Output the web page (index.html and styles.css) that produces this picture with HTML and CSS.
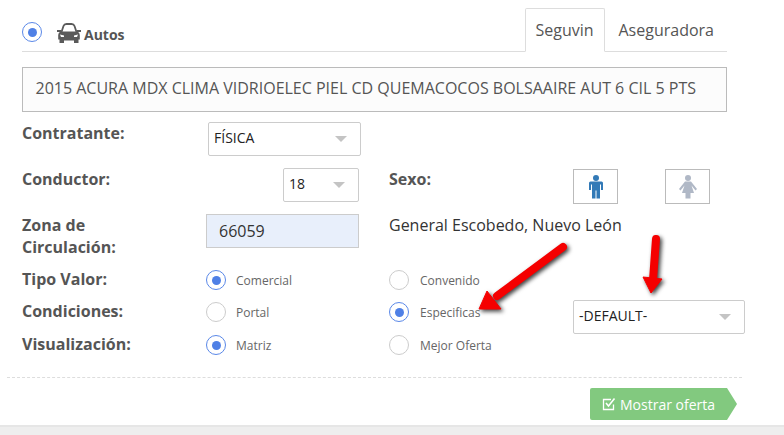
FILE: index.html
```html
<!DOCTYPE html>
<html lang="es">
<head>
<meta charset="utf-8">
<title>Autos</title>
<link rel="stylesheet" href="styles.css">
</head>
<body>
<div class="page">
  <header class="head">
    <span class="radio on head-radio"></span>
    <svg class="car" viewBox="0 0 24 20" width="24" height="20">
      <path d="M4.500 9 L6.500 3 Q7.200 1 9.500 1 H14.500 Q16.800 1 17.500 3 L19.500 9" fill="none" stroke="#5a5a5a" stroke-width="1.800"/>
      <path d="M0 7 H4 V9 H0 Z M20 7 H24 V9 H20 Z" fill="#5a5a5a"/>
      <path d="M3.500 8.500 H20.500 Q22.800 9.500 22.800 12 V16.500 H21.500 V20 H17 V17.500 H7 V20 H2.500 V16.500 H1.200 V12 Q1.200 9.500 3.500 8.500 Z" fill="#5a5a5a"/>
      <path d="M3 11.500 L7 12.500 V14 H4 Z M21 11.500 L17 12.500 V14 H20 Z" fill="#fff"/>
    </svg>
    <strong class="head-title">Autos</strong>
    <nav class="tabs">
      <span class="tab active">Seguvin</span>
      <span class="tab">Aseguradora</span>
    </nav>
  </header>

  <div class="vehicle">2015 ACURA MDX CLIMA VIDRIOELEC PIEL CD QUEMACOCOS BOLSAAIRE AUT 6 CIL 5 PTS</div>

  <div class="row row-contratante">
    <label class="label">Contratante:</label>
    <div class="select select-tipo">FÍSICA</div>
  </div>

  <div class="row row-conductor">
    <label class="label">Conductor:</label>
    <div class="cell-end"><div class="select select-edad">18</div></div>
    <label class="label">Sexo:</label>
    <div class="sex">
      <span class="sex-btn">
        <svg viewBox="0 0 16 24" width="16" height="24"><circle cx="8" cy="3" r="3" fill="#337ab7"/><path d="M2.500 6.500 H13.500 Q15 6.500 15 8 V15 H13 V9.500 H12 V23.500 H8.500 V15.500 H7.500 V23.500 H4 V9.500 H3 V15 H1 V8 Q1 6.500 2.500 6.500 Z" fill="#337ab7"/></svg>
      </span>
      <span class="sex-btn">
        <svg viewBox="0 0 20 24" width="20" height="24"><circle cx="10" cy="3" r="3" fill="#b0b8c6"/><path d="M7 6.500 H13 L19 14 L17.500 15.500 L13.500 10.500 L16 18 H12.500 V23.500 H7.500 V18 H4 L6.500 10.500 L2.500 15.500 L1 14 Z" fill="#b0b8c6"/></svg>
      </span>
    </div>
  </div>

  <div class="row row-zona">
    <label class="label label-wrap">Zona de Circulación:</label>
    <div class="zip">66059</div>
    <div class="place">General Escobedo, Nuevo León</div>
  </div>

  <div class="row row-opt row-tipo">
    <label class="label">Tipo Valor:</label>
    <div class="opt"><span class="radio on"></span><span class="opt-text">Comercial</span></div>
    <div class="opt"><span class="radio"></span><span class="opt-text">Convenido</span></div>
  </div>

  <div class="row row-opt row-cond">
    <label class="label">Condiciones:</label>
    <div class="opt"><span class="radio"></span><span class="opt-text">Portal</span></div>
    <div class="opt"><span class="radio on"></span><span class="opt-text">Especificas</span></div>
    <div class="select select-default">-DEFAULT-</div>
  </div>

  <div class="row row-opt row-vis">
    <label class="label">Visualización:</label>
    <div class="opt"><span class="radio on"></span><span class="opt-text">Matriz</span></div>
    <div class="opt"><span class="radio"></span><span class="opt-text">Mejor Oferta</span></div>
  </div>

  <div class="divider"></div>

  <div class="actions">
    <button class="cta" type="button">
      <svg viewBox="0 0 14 14" width="14" height="14"><path d="M11.500 7.500 V12.500 H1.500 V2.500 H9" fill="none" stroke="#fff" stroke-width="1.300"/><path d="M4 6 L6.500 9 L12.500 1.500" fill="none" stroke="#fff" stroke-width="1.600"/></svg>
      Mostrar oferta
    </button>
  </div>

  <footer class="foot"></footer>

  <svg class="arrows" viewBox="0 0 784 435" width="784" height="435">
    <g class="arrow">
      <path d="M563 247 L497 296" fill="none" stroke="#f50000" stroke-width="8" stroke-linecap="round"/>
      <path d="M479 309 L487 291 L501 309 Z" fill="#f50000" stroke="#f50000" stroke-width="1" stroke-linejoin="round"/>
      <path d="M656 239 L653 280" fill="none" stroke="#f50000" stroke-width="8" stroke-linecap="round"/>
      <path d="M651 293 L643 277 L662 279 Z" fill="#f50000" stroke="#f50000" stroke-width="1" stroke-linejoin="round"/>
    </g>
  </svg>
</div>
</body>
</html>
```

FILE: styles.css
```css
* { box-sizing: border-box; }

html, body {
  margin: 0;
  background: #fff;
}

.page {
  position: relative;
  width: 784px;
  height: 435px;
  overflow: hidden;
  font-family: "Open Sans", sans-serif;
  color: #555;
  display: flex;
  flex-direction: column;
}

/* header */
.head {
  display: flex;
  align-items: flex-end;
  height: 52px;
  margin: 0 57px 0 22px;
  border-bottom: 1px solid #ddd;
  flex: none;
}

.radio {
  width: 20px;
  height: 20px;
  flex: none;
  border: 1px solid #ccc;
  border-radius: 50%;
  background: #fff;
  display: block;
  position: relative;
}

.radio.on {
  border-color: #5a88e8;
}

.radio.on::after {
  content: "";
  position: absolute;
  left: 4.500px;
  top: 4.500px;
  width: 9px;
  height: 9px;
  border-radius: 50%;
  background: #4f80e6;
}

.head-radio { margin-bottom: 9px; }

.car {
  margin: 0 3px 8px 15px;
  flex: none;
}

.head-title {
  font-size: 14px;
  line-height: 18px;
  margin-bottom: 7px;
  font-weight: 700;
}

.tabs {
  display: flex;
  margin-left: auto;
  margin-bottom: -1px;
}

.tab {
  height: 44px;
  padding: 0 13px;
  font-size: 16px;
  line-height: 43px;
  border: 1px solid transparent;
}

.tab.active {
  width: 80px;
  padding: 0 10px;
  border-color: #ddd;
  border-bottom-color: #fff;
  border-radius: 2px 2px 0 0;
  background: #fff;
}

.tab:last-child { padding-right: 12px; }

/* vehicle description */
.vehicle {
  flex: none;
  height: 45px;
  margin: 15px 57px 0 22px;
  padding-left: 12.500px;
  border: 1px solid #bbb;
  background: #fcfcfc;
  font-size: 16px;
  line-height: 41px;
  white-space: nowrap;
}

/* form rows */
.row {
  flex: none;
  display: grid;
  grid-template-columns: 184px 183px 184px 172px;
  margin-left: 22px;
}

.row-contratante { height: 34px; margin-top: 10px; }
.row-conductor   { height: 36px; margin-top: 12px; }
.row-zona        { height: 44px; margin-top: 10px; }
.row-tipo        { height: 20px; margin-top: 12px; }
.row-cond        { height: 20px; margin-top: 12px; }
.row-vis         { height: 20px; margin-top: 13px; }

.label {
  font-size: 16px;
  font-weight: 700;
  line-height: 22px;
}

.row-opt .label { margin-top: -2px; }

.label-wrap {
  display: block;
  width: 110px;
}

.select {
  position: relative;
  height: 34px;
  padding-left: 5px;
  background: #fff;
  border: 1px solid #ccc;
  border-radius: 2px;
  color: #222;
  font-size: 14px;
  line-height: 30px;
}

.select::after {
  content: "";
  position: absolute;
  right: 13px;
  top: 13px;
  border-style: solid;
  border-width: 6px 6px 0;
  border-color: #c4c4c4 transparent transparent;
}

.select-tipo {
  width: 153px;
  margin-left: 2px;
}

.cell-end {
  display: flex;
  justify-content: flex-end;
  padding-right: 30px;
}

.select-edad { width: 76px; }

.select-default {
  width: 172px;
  margin-top: -2px;
}

.sex {
  display: flex;
  gap: 47px;
  height: 36px;
}

.sex-btn {
  display: flex;
  align-items: center;
  justify-content: center;
  width: 45px;
  height: 35px;
  margin-top: 1px;
  border: 1px solid #bbb;
  background: #fff;
}

.zip {
  width: 153px;
  height: 34px;
  padding-left: 12px;
  background: #e8effb;
  border: 1px solid #ccc;
  color: #333;
  font-size: 16px;
  line-height: 32px;
}

.place {
  grid-column: 3 / 5;
  color: #333;
  font-size: 16px;
  line-height: 22px;
}

.opt {
  display: flex;
  align-items: center;
  gap: 10px;
  height: 20px;
}

.opt + .opt { gap: 11px; }

.opt-text {
  font-size: 12px;
  line-height: 22px;
  margin-top: 1px;
  color: #666;
}

/* footer area */
.divider {
  flex: none;
  height: 0;
  margin: 22px 42px 0 7px;
  border-top: 1px dashed #ddd;
}

.actions {
  flex: none;
  display: flex;
  margin: 10px 0 0 590px;
}

.cta {
  position: relative;
  width: 137px;
  height: 32px;
  padding: 0 0 0 12px;
  display: flex;
  align-items: center;
  gap: 4px;
  border: 0;
  border-radius: 2px 0 0 2px;
  background: #82c97f;
  color: #fff;
  font-family: "Open Sans", sans-serif;
  font-size: 14px;
}

.cta::after {
  content: "";
  position: absolute;
  left: 100%;
  top: 0;
  border-style: solid;
  border-width: 16px 0 16px 10px;
  border-color: transparent transparent transparent #82c97f;
}

.foot {
  flex: none;
  height: 10px;
  margin-top: 5px;
  background: #eee;
  border-top: 2px solid #e6e6e6;
}

/* annotations drawn over the form */
.arrows {
  position: absolute;
  left: 0;
  top: 0;
  pointer-events: none;
}

.arrow {
  filter: drop-shadow(2px 2px 2px rgba(0, 0, 0, .75));
}
```
